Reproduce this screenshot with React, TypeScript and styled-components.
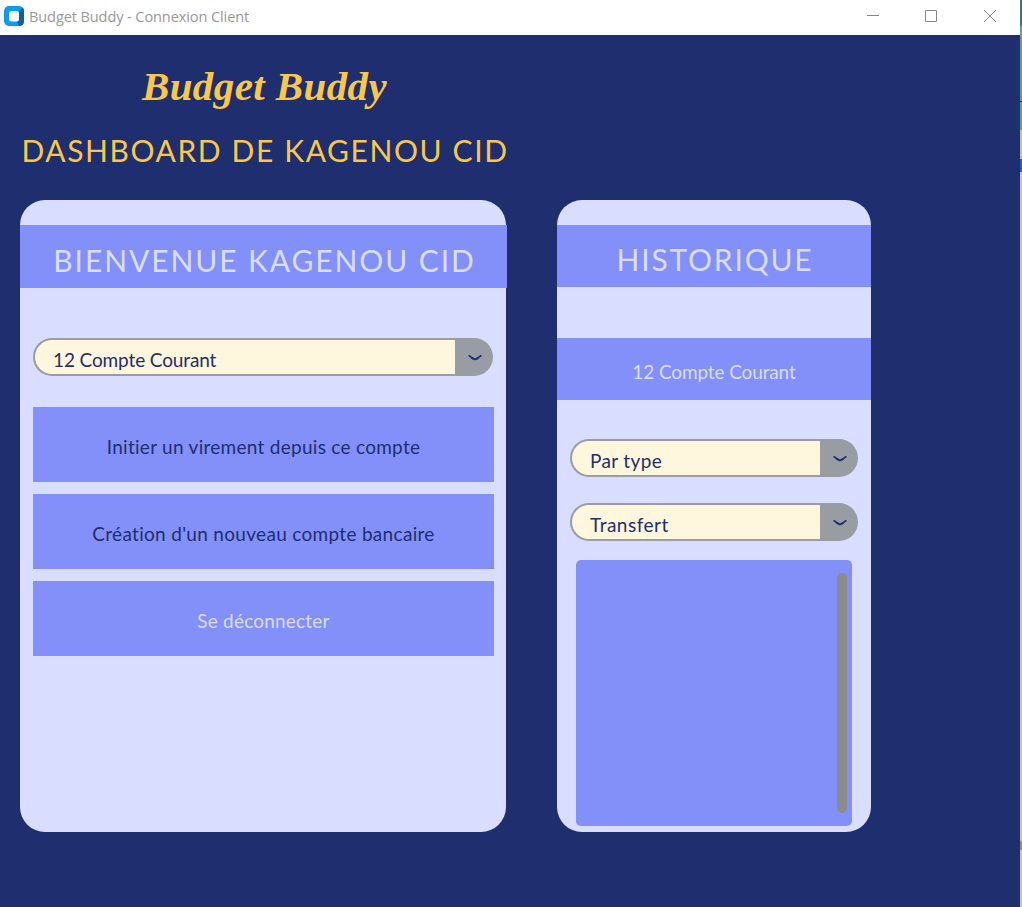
import React from "react";
import styled, { createGlobalStyle } from "styled-components";

const color = {
  navy: "#1e2e6e",
  lavender: "#d9ddff",
  periwinkle: "#8390fa",
  yellow: "#fac748",
  cream: "#fff6de",
  grey: "#979da2",
};

const GlobalStyle = createGlobalStyle`
  * { box-sizing: border-box; }
  body { margin: 0; overflow: hidden; font-family: Lato, "Liberation Sans", sans-serif; }
  button { font: inherit; border: 0; margin: 0; }
`;

const Desktop = styled.div`
  display: flex;
  width: 1022px;
  height: 907px;
`;

const Window = styled.div`
  display: flex;
  flex-direction: column;
  width: 1020px;
  background: ${color.navy};
`;

const EdgeStrip = styled.div`
  display: flex;
  flex-direction: column;
  width: 2px;
  background: #c4c4cc;
`;

const EdgePiece = styled.div<{ $h: number; $c: string }>`
  height: ${(p) => p.$h}px;
  background: ${(p) => p.$c};
`;

const TitleBar = styled.header`
  display: flex;
  align-items: center;
  height: 35px;
  padding: 0 1px 3px 4px;
  background: #fff;
`;

const WindowTitle = styled.span`
  flex: 1;
  padding: 2px 0 0 5px;
  font: 14.5px/20px "Open Sans", "Noto Sans", sans-serif;
  letter-spacing: -0.08px;
  color: #999;
  white-space: nowrap;
`;

const WindowButton = styled.span`
  display: flex;
  justify-content: center;
  width: 58.5px;
`;

const Content = styled.main`
  display: flex;
  gap: 51px;
  padding-left: 20px;
`;

const Column = styled.section<{ $w: number }>`
  display: flex;
  flex-direction: column;
  width: ${(p) => p.$w}px;
`;

const Masthead = styled.div`
  height: 165px;
  padding-top: 26px;
`;

const Brand = styled.div`
  height: 50px;
  padding-left: 3px;
  text-align: center;
  white-space: nowrap;
  font: italic 700 41px/50px "Liberation Serif", serif;
  letter-spacing: 0.4px;
  color: ${color.yellow};
`;

const Heading = styled.h1<{ $spacing: number }>`
  display: flex;
  justify-content: center;
  margin: 0;
  padding-left: 2px;
  white-space: nowrap;
  font-size: 30px;
  font-weight: 400;
  line-height: 40px;
  letter-spacing: ${(p) => p.$spacing}px;
`;

const PageHeading = styled(Heading)`
  margin-top: 19px;
  padding-left: 4px;
  color: ${color.yellow};
`;

const Card = styled.div`
  display: flex;
  flex-direction: column;
  height: 632px;
  padding-top: 25px;
  border-radius: 25px;
  background: ${color.lavender};
`;

const Band = styled.div<{ $h: number; $extra?: number }>`
  display: flex;
  align-items: center;
  justify-content: center;
  flex: none;
  height: ${(p) => p.$h}px;
  margin-right: -${(p) => p.$extra ?? 0}px;
  padding-top: 6px;
  background: ${color.periwinkle};
  color: ${color.lavender};
`;

const Label = styled.span<{ $spacing: number }>`
  font-size: 19px;
  line-height: 24px;
  white-space: nowrap;
  letter-spacing: ${(p) => p.$spacing}px;
`;

const AccountBand = styled(Band)`
  margin-top: 51px;
  padding-top: 6px;
`;

const Select = styled.div`
  display: flex;
  height: 38px;
  padding: 2px;
  border-radius: 19px;
  background: ${color.grey};
  color: ${color.navy};
`;

const SelectValue = styled.div`
  display: flex;
  align-items: center;
  flex: 1;
  padding: 5px 0 0 18px;
  border-radius: 17px 0 0 17px;
  background: ${color.cream};
`;

const SelectArrow = styled.div`
  display: flex;
  align-items: center;
  justify-content: center;
  width: 36px;
  padding: 2px 0 0 3px;
`;

const Actions = styled.div`
  display: flex;
  flex-direction: column;
  gap: 12px;
  width: 461px;
  margin: 50px 0 0 13px;

  ${Select} {
    width: 460px;
    margin-bottom: 19px;
  }
`;

const ActionButton = styled.button<{ $light?: boolean }>`
  height: 75px;
  padding: 5px 0 0;
  background: ${color.periwinkle};
  color: ${(p) => (p.$light ? color.lavender : color.navy)};
`;

const Filters = styled.div`
  display: flex;
  flex-direction: column;
  gap: 26px;
  margin: 39px 13px 0;
`;

const HistoryList = styled.div`
  display: flex;
  justify-content: flex-end;
  height: 266px;
  margin: 19px 19px 0;
  padding: 13px 5px;
  border-radius: 5px;
  background: ${color.periwinkle};
`;

const ScrollThumb = styled.div`
  width: 10px;
  height: 240px;
  border-radius: 5px;
  background: #8b8b8b;
`;

const AppIcon = () => (
  <svg width="20" height="20" viewBox="0 0 20 20">
    <rect width="20" height="20" rx="5" fill="#0a9bf5" />
    <path d="M15 5 18.6 1.6Q20 3 20 5v10q0 5-5 5l-2-4 2-2z" fill="#0a5fa8" />
    <rect x="5" y="5" width="10" height="10.5" rx="2.5" fill="#fff" />
  </svg>
);

const Chevron = () => (
  <svg width="14" height="8" viewBox="0 0 14 8" fill="none" stroke={color.navy}>
    <path d="M1.2 1.8 3.4 3.4 7 5.6 10.6 3.4 12.8 1.8" strokeWidth="1.7" strokeLinecap="round" />
    <path d="M3.2 3.4 5.8 5.2M10.8 3.4 8.2 5.2" strokeWidth="1.8" />
  </svg>
);

const Dropdown = ({ value, spacing }: { value: string; spacing: number }) => (
  <Select>
    <SelectValue>
      <Label $spacing={spacing}>{value}</Label>
    </SelectValue>
    <SelectArrow>
      <Chevron />
    </SelectArrow>
  </Select>
);

export default function App() {
  return (
    <Desktop>
      <GlobalStyle />
      <Window>
        <TitleBar>
          <AppIcon />
          <WindowTitle>Budget Buddy - Connexion Client</WindowTitle>
          <WindowButton>
            <svg width="12" height="12" stroke="#888"><path d="M0 5.5h12" /></svg>
          </WindowButton>
          <WindowButton>
            <svg width="12" height="12" stroke="#888" fill="none"><path d="M.5.5h11v11H.5z" /></svg>
          </WindowButton>
          <WindowButton>
            <svg width="12" height="12" stroke="#888"><path d="M0 0 12 12M12 0 0 12" /></svg>
          </WindowButton>
        </TitleBar>
        <Content>
          <Column $w={486}>
            <Masthead>
              <Brand>Budget Buddy</Brand>
              <PageHeading $spacing={1.6}>DASHBOARD DE KAGENOU CID</PageHeading>
            </Masthead>
            <Card>
              <Band $h={63} $extra={1}>
                <Heading as="h2" $spacing={1.9}>BIENVENUE KAGENOU CID</Heading>
              </Band>
              <Actions>
                <Dropdown value="12 Compte Courant" spacing={-0.12} />
                <ActionButton>
                  <Label $spacing={0.28}>Initier un virement depuis ce compte</Label>
                </ActionButton>
                <ActionButton>
                  <Label $spacing={0.31}>Création d'un nouveau compte bancaire</Label>
                </ActionButton>
                <ActionButton $light>
                  <Label $spacing={0.2}>Se déconnecter</Label>
                </ActionButton>
              </Actions>
            </Card>
          </Column>
          <Column $w={314}>
            <Masthead />
            <Card>
              <Band $h={62}>
                <Heading as="h2" $spacing={1.8}>HISTORIQUE</Heading>
              </Band>
              <AccountBand $h={62}>
                <Label $spacing={-0.12}>12 Compte Courant</Label>
              </AccountBand>
              <Filters>
                <Dropdown value="Par type" spacing={0.35} />
                <Dropdown value="Transfert" spacing={0.5} />
              </Filters>
              <HistoryList>
                <ScrollThumb />
              </HistoryList>
            </Card>
          </Column>
        </Content>
      </Window>
      <EdgeStrip>
        <EdgePiece $h={26} $c="#2f7d75" />
        <EdgePiece $h={75} $c="#56a39b" />
        <EdgePiece $h={1} $c="#10201e" />
        <EdgePiece $h={28} $c="#56a39b" />
        <EdgePiece $h={29} $c="#c0bfbf" />
        <EdgePiece $h={13} $c="#1560c8" />
        <EdgePiece $h={669} $c="#c4c4cc" />
        <EdgePiece $h={9} $c="#8e8e92" />
      </EdgeStrip>
    </Desktop>
  );
}
